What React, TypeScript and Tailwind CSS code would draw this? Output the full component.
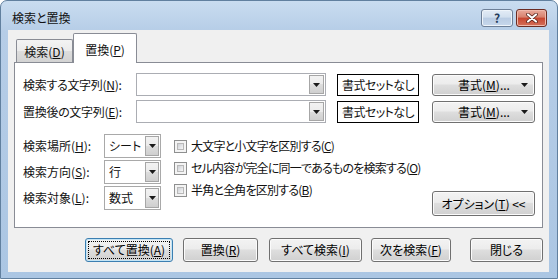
import type { ReactNode } from 'react';

// small black triangle used in dropdown buttons
function Tri() {
  return (
    <svg width="7" height="4" viewBox="0 0 7 4">
      <path d="M0 0h7L3.5 4z" fill="#1a1a1a" />
    </svg>
  );
}

function U({ c }: { c: string }) {
  return <span className="underline underline-offset-1">{c}</span>;
}

function Btn({ children, className = '', primary = false }: { children: ReactNode; className?: string; primary?: boolean }) {
  return (
    <button
      className={`flex items-center justify-center whitespace-nowrap rounded-[3px] border bg-[linear-gradient(#f3f3f3,#ececec_45%,#dedede_50%,#d0d0d0)] text-[12px] text-black ${
        primary
          ? 'border-[#3c7fb1] shadow-[inset_0_0_0_1px_#c4e5f6] outline-1 outline-dotted outline-black -outline-offset-4'
          : 'border-[#707070] shadow-[inset_0_0_0_1px_#fbfbfb]'
      } ${className}`}
    >
      {children}
    </button>
  );
}

function Combo() {
  return (
    <div className="w-[190px] h-[23px] border border-[#abadb3] bg-white flex justify-end p-[1px]">
      <div className="w-[15px] border border-[#a6a6a6] bg-[linear-gradient(#f2f2f2,#ebebeb_50%,#dddddd_50%,#cfcfcf)] flex items-center justify-center">
        <Tri />
      </div>
    </div>
  );
}

function Select({ value }: { value: string }) {
  return (
    <div className="w-[57px] h-[24px] border border-[#a9a9a9] bg-white flex p-[1px]">
      <div className="flex-1 flex items-center pl-[3px]">{value}</div>
      <div className="w-[14px] border border-[#a6a6a6] bg-[linear-gradient(#f2f2f2,#ebebeb_50%,#dddddd_50%,#cfcfcf)] flex items-center justify-center">
        <Tri />
      </div>
    </div>
  );
}

function Check({ children }: { children: ReactNode }) {
  return (
    <div className="h-[22px] flex items-center whitespace-nowrap">
      <span className="w-[13px] h-[13px] border border-[#8e8f8f] bg-[#f4f4f4] p-[2px] mr-[4px]">
        <span className="block w-full h-full border border-[#b8b8b8] bg-[linear-gradient(135deg,#cdd0d5,#f7f7f7)]" />
      </span>
      <span>{children}</span>
    </div>
  );
}

export default function App() {
  return (
    <div className="w-[558px] h-[279px] overflow-hidden bg-white">
      <div className="w-full h-full flex flex-col pl-[7px] pr-[8px] pb-[6px] rounded-t-[7px] border border-[#61809f] bg-[linear-gradient(#c9dcf0,#b6cde7_30px,#abc6e3)] font-['Noto_Sans_CJK_JP',sans-serif] text-[12px] text-[#111] [font-feature-settings:'palt']">
        {/* title bar */}
        <div className="h-[29px] flex items-center pt-[4px] pl-[4px]">
          <span className="text-[12px]">検索と置換</span>
          <div className="ml-auto flex gap-[3px] mr-[2px]">
            <div className="w-[32px] h-[18px] rounded-[3px] border border-[#6d7f97] bg-[linear-gradient(#e3ecf6,#d2dfee_45%,#b9cce3_50%,#c7d8ec)] shadow-[inset_0_0_0_1px_#eef4fa] flex items-center justify-center text-[12px] font-bold text-[#233b5a] leading-none">
              ?
            </div>
            <div className="w-[31px] h-[18px] rounded-[3px] border border-[#6b2c23] bg-[linear-gradient(#e9a99b,#d8816d_45%,#c7452f_50%,#d4705a)] shadow-[inset_0_0_0_1px_#f0b9ab] flex items-center justify-center">
              <svg width="12" height="10" viewBox="0 0 12 10">
                <path d="M2 1.5l8 7M10 1.5l-8 7" stroke="#4a1a12" strokeWidth="3.6" strokeLinecap="round" />
                <path d="M2 1.5l8 7M10 1.5l-8 7" stroke="#fff" strokeWidth="2.2" strokeLinecap="round" />
              </svg>
            </div>
          </div>
        </div>

        {/* client area */}
        <div className="flex-1 bg-[#f0f0f0] flex flex-col pl-[6px] pt-[3px]">
          <div className="flex items-end h-[29px] pl-[2px]">
            <div className="w-[57px] h-[23px] border border-b-0 border-[#898c95] rounded-t-[2px] bg-[linear-gradient(#f3f3f3,#ebebeb_50%,#dddddd_50%,#d3d3d3)] flex items-center justify-center pt-[2px]">
              検索(<U c="D" />)
            </div>
            <div className="w-[64px] h-[30px] -mb-px relative z-10 border border-b-0 border-[#898c95] rounded-t-[2px] bg-white flex items-center justify-center pt-[3px]">
              置換(<U c="P" />)
            </div>
          </div>

          <div className="w-[529px] h-[166px] border border-[#898c95] bg-white pt-[10px] pl-[8px]">
            <div className="flex items-center h-[23px]">
              <span className="w-[113px] whitespace-nowrap tracking-[-0.3px]">
                検索する文字列(<U c="N" />):
              </span>
              <Combo />
              <div className="ml-[11px] w-[82px] h-[22px] border border-black bg-white flex items-center justify-center whitespace-nowrap tracking-[-0.6px]">
                書式セットなし
              </div>
              <Btn className="ml-[13px] w-[103px] h-[22px] pl-[14px] pr-[6px]">
                <span className="flex-1 text-center">
                  書式(<U c="M" />)...
                </span>
                <Tri />
              </Btn>
            </div>
            <div className="flex items-center h-[23px] mt-[4px]">
              <span className="w-[113px] whitespace-nowrap tracking-[-0.3px]">
                置換後の文字列(<U c="E" />):
              </span>
              <Combo />
              <div className="ml-[11px] w-[82px] h-[22px] border border-black bg-white flex items-center justify-center whitespace-nowrap tracking-[-0.6px]">
                書式セットなし
              </div>
              <Btn className="ml-[13px] w-[103px] h-[22px] pl-[14px] pr-[6px]">
                <span className="flex-1 text-center">
                  書式(<U c="M" />)...
                </span>
                <Tri />
              </Btn>
            </div>

            <div className="flex mt-[10px]">
              <div className="flex flex-col flex-none">
                <div className="h-[26px] flex items-center whitespace-nowrap">
                  <span className="w-[81px]">
                    検索場所(<U c="H" />):
                  </span>
                  <Select value="シート" />
                </div>
                <div className="h-[26px] flex items-center whitespace-nowrap">
                  <span className="w-[81px]">
                    検索方向(<U c="S" />):
                  </span>
                  <Select value="行" />
                </div>
                <div className="h-[26px] flex items-center whitespace-nowrap">
                  <span className="w-[81px]">
                    検索対象(<U c="L" />):
                  </span>
                  <Select value="数式" />
                </div>
              </div>
              <div className="flex flex-col flex-none ml-[13px] pt-[2px] tracking-[-0.8px]">
                <Check>
                  大文字と小文字を区別する(<U c="C" />)
                </Check>
                <Check>
                  セル内容が完全に同一であるものを検索する(<U c="O" />)
                </Check>
                <Check>
                  半角と全角を区別する(<U c="B" />)
                </Check>
              </div>
              <Btn className="ml-auto flex-none mr-[7px] mt-[58px] w-[103px] h-[25px]">
                オプション(<U c="T" />) &lt;&lt;
              </Btn>
            </div>
          </div>

          <div className="flex mt-[10px] pl-[71px]">
            <Btn primary className="w-[88px] h-[24px]">
              すべて置換(<U c="A" />)
            </Btn>
            <Btn className="ml-[10px] w-[75px] h-[24px]">
              置換(<U c="R" />)
            </Btn>
            <Btn className="ml-[11px] w-[93px] h-[24px]">
              すべて検索(<U c="I" />)
            </Btn>
            <Btn className="ml-[9px] w-[80px] h-[24px]">
              次を検索(<U c="F" />)
            </Btn>
            <Btn className="ml-[19px] w-[73px] h-[24px]">
              閉じる
            </Btn>
          </div>
        </div>
      </div>
    </div>
  );
}
